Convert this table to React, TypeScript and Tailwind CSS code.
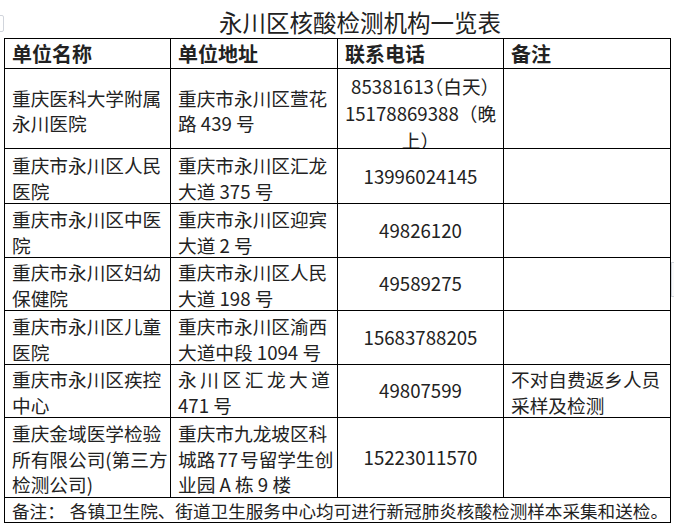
import React from "react";

const FONT = "[font-family:'Noto_Sans_CJK_SC','Noto_Sans',sans-serif]";

type Row = {
  h: string;
  c1: React.ReactNode;
  c2: React.ReactNode;
  c3: React.ReactNode;
  c4?: React.ReactNode;
  top?: boolean;
};

const L = ({ children, cls = "" }: { children: React.ReactNode; cls?: string }) => (
  <span className={"block whitespace-nowrap " + cls}>{children}</span>
);

const rows: Row[] = [
  {
    h: "h-[80px]",
    c1: (
      <>
        <L>重庆医科大学附属</L>
        <L>永川医院</L>
      </>
    ),
    c2: (
      <>
        <L>重庆市永川区萱花</L>
        <L>路 439 号</L>
      </>
    ),
    c3: (
      <>
        <L>
          85381613<span className="[font-feature-settings:'halt']">（</span>白天<span className="[font-feature-settings:'halt']">）</span>
        </L>
        <L>15178869388（晚</L>
        <L>上）</L>
      </>
    ),
    top: true,
  },
  {
    h: "h-[54px]",
    c1: (
      <>
        <L>重庆市永川区人民</L>
        <L>医院</L>
      </>
    ),
    c2: (
      <>
        <L>重庆市永川区汇龙</L>
        <L>大道 375 号</L>
      </>
    ),
    c3: <L>13996024145</L>,
  },
  {
    h: "h-[53px]",
    c1: (
      <>
        <L>重庆市永川区中医</L>
        <L>院</L>
      </>
    ),
    c2: (
      <>
        <L>重庆市永川区迎宾</L>
        <L>大道 2 号</L>
      </>
    ),
    c3: <L>49826120</L>,
  },
  {
    h: "h-[54px]",
    c1: (
      <>
        <L>重庆市永川区妇幼</L>
        <L>保健院</L>
      </>
    ),
    c2: (
      <>
        <L>重庆市永川区人民</L>
        <L>大道 198 号</L>
      </>
    ),
    c3: <L>49589275</L>,
  },
  {
    h: "h-[53px]",
    c1: (
      <>
        <L>重庆市永川区儿童</L>
        <L>医院</L>
      </>
    ),
    c2: (
      <>
        <L>重庆市永川区渝西</L>
        <L>大道中段 1094 号</L>
      </>
    ),
    c3: <L>15683788205</L>,
  },
  {
    h: "h-[54px]",
    c1: (
      <>
        <L>重庆市永川区疾控</L>
        <L>中心</L>
      </>
    ),
    c2: (
      <>
        <span className="block whitespace-nowrap [text-align-last:justify] text-justify">永川区汇龙大道</span>
        <L>471 号</L>
      </>
    ),
    c3: <L>49807599</L>,
    c4: (
      <>
        <L>不对自费返乡人员</L>
        <L>采样及检测</L>
      </>
    ),
  },
  {
    h: "h-[80px]",
    c1: (
      <>
        <L>重庆金域医学检验</L>
        <L>所有限公司(第三方</L>
        <L>检测公司)</L>
      </>
    ),
    c2: (
      <>
        <L>重庆市九龙坡区科</L>
        <L>城路<span className="ml-[2px]">77</span><span className="ml-[2px]">号留学生创</span></L>
        <L>业园 A 栋 9 楼</L>
      </>
    ),
    c3: <L>15223011570</L>,
  },
];

export default function App() {
  const cell = "border-r border-b border-black px-[7px] flex flex-col";
  return (
    <div className={"relative w-[674px] h-[529px] bg-white text-[#222] " + FONT}>
      <div className="pt-[6px] h-[38px]">
        <div className="pl-[219px] text-[23.5px] leading-[32px] whitespace-nowrap">永川区核酸检测机构一览表</div>
      </div>

      <div className="ml-[4px] w-[667px] border-l border-t border-black text-[18.67px] leading-[25.5px]">
        <div className="grid grid-cols-[166px_167px_166px_167px] h-[30px] font-bold text-[20px]">
          <div className={cell + " justify-center"}>单位名称</div>
          <div className={cell + " justify-center"}>单位地址</div>
          <div className={cell + " justify-center"}>联系电话</div>
          <div className={cell + " justify-center"}>备注</div>
        </div>
        {rows.map((r, i) => (
          <div key={i} className={"grid grid-cols-[166px_167px_166px_167px] " + r.h}>
            <div className={cell + " justify-center pt-[3px]"}>{r.c1}</div>
            <div className={cell + " justify-center pt-[3px]"}>{r.c2}</div>
            <div
              className={
                cell +
                " items-center text-center " +
                (r.top ? "justify-start pt-[3px] leading-[27px] overflow-hidden" : "justify-center pt-0")
              }
            >
              {r.c3}
            </div>
            <div className={cell + " justify-center pt-[3px]"}>{r.c4}</div>
          </div>
        ))}
        <div className="h-[26px] border-r border-b border-black pl-[7px] pt-[2px] flex items-center text-[17.6px] whitespace-nowrap">
          <span>备注：</span>
          <span className="ml-[5px]">各镇卫生院、街道卫生服务中心均可进行新冠肺炎核酸检测样本采集和送检。</span>
        </div>
      </div>

      <div className="absolute left-[-6px] top-[15px] w-[10px] h-[17px] border border-gray-300 rounded-[2px]" />
      <div className="absolute left-[671px] top-[262px] w-[8px] h-[35px] border border-gray-300 bg-gray-50" />
    </div>
  );
}
